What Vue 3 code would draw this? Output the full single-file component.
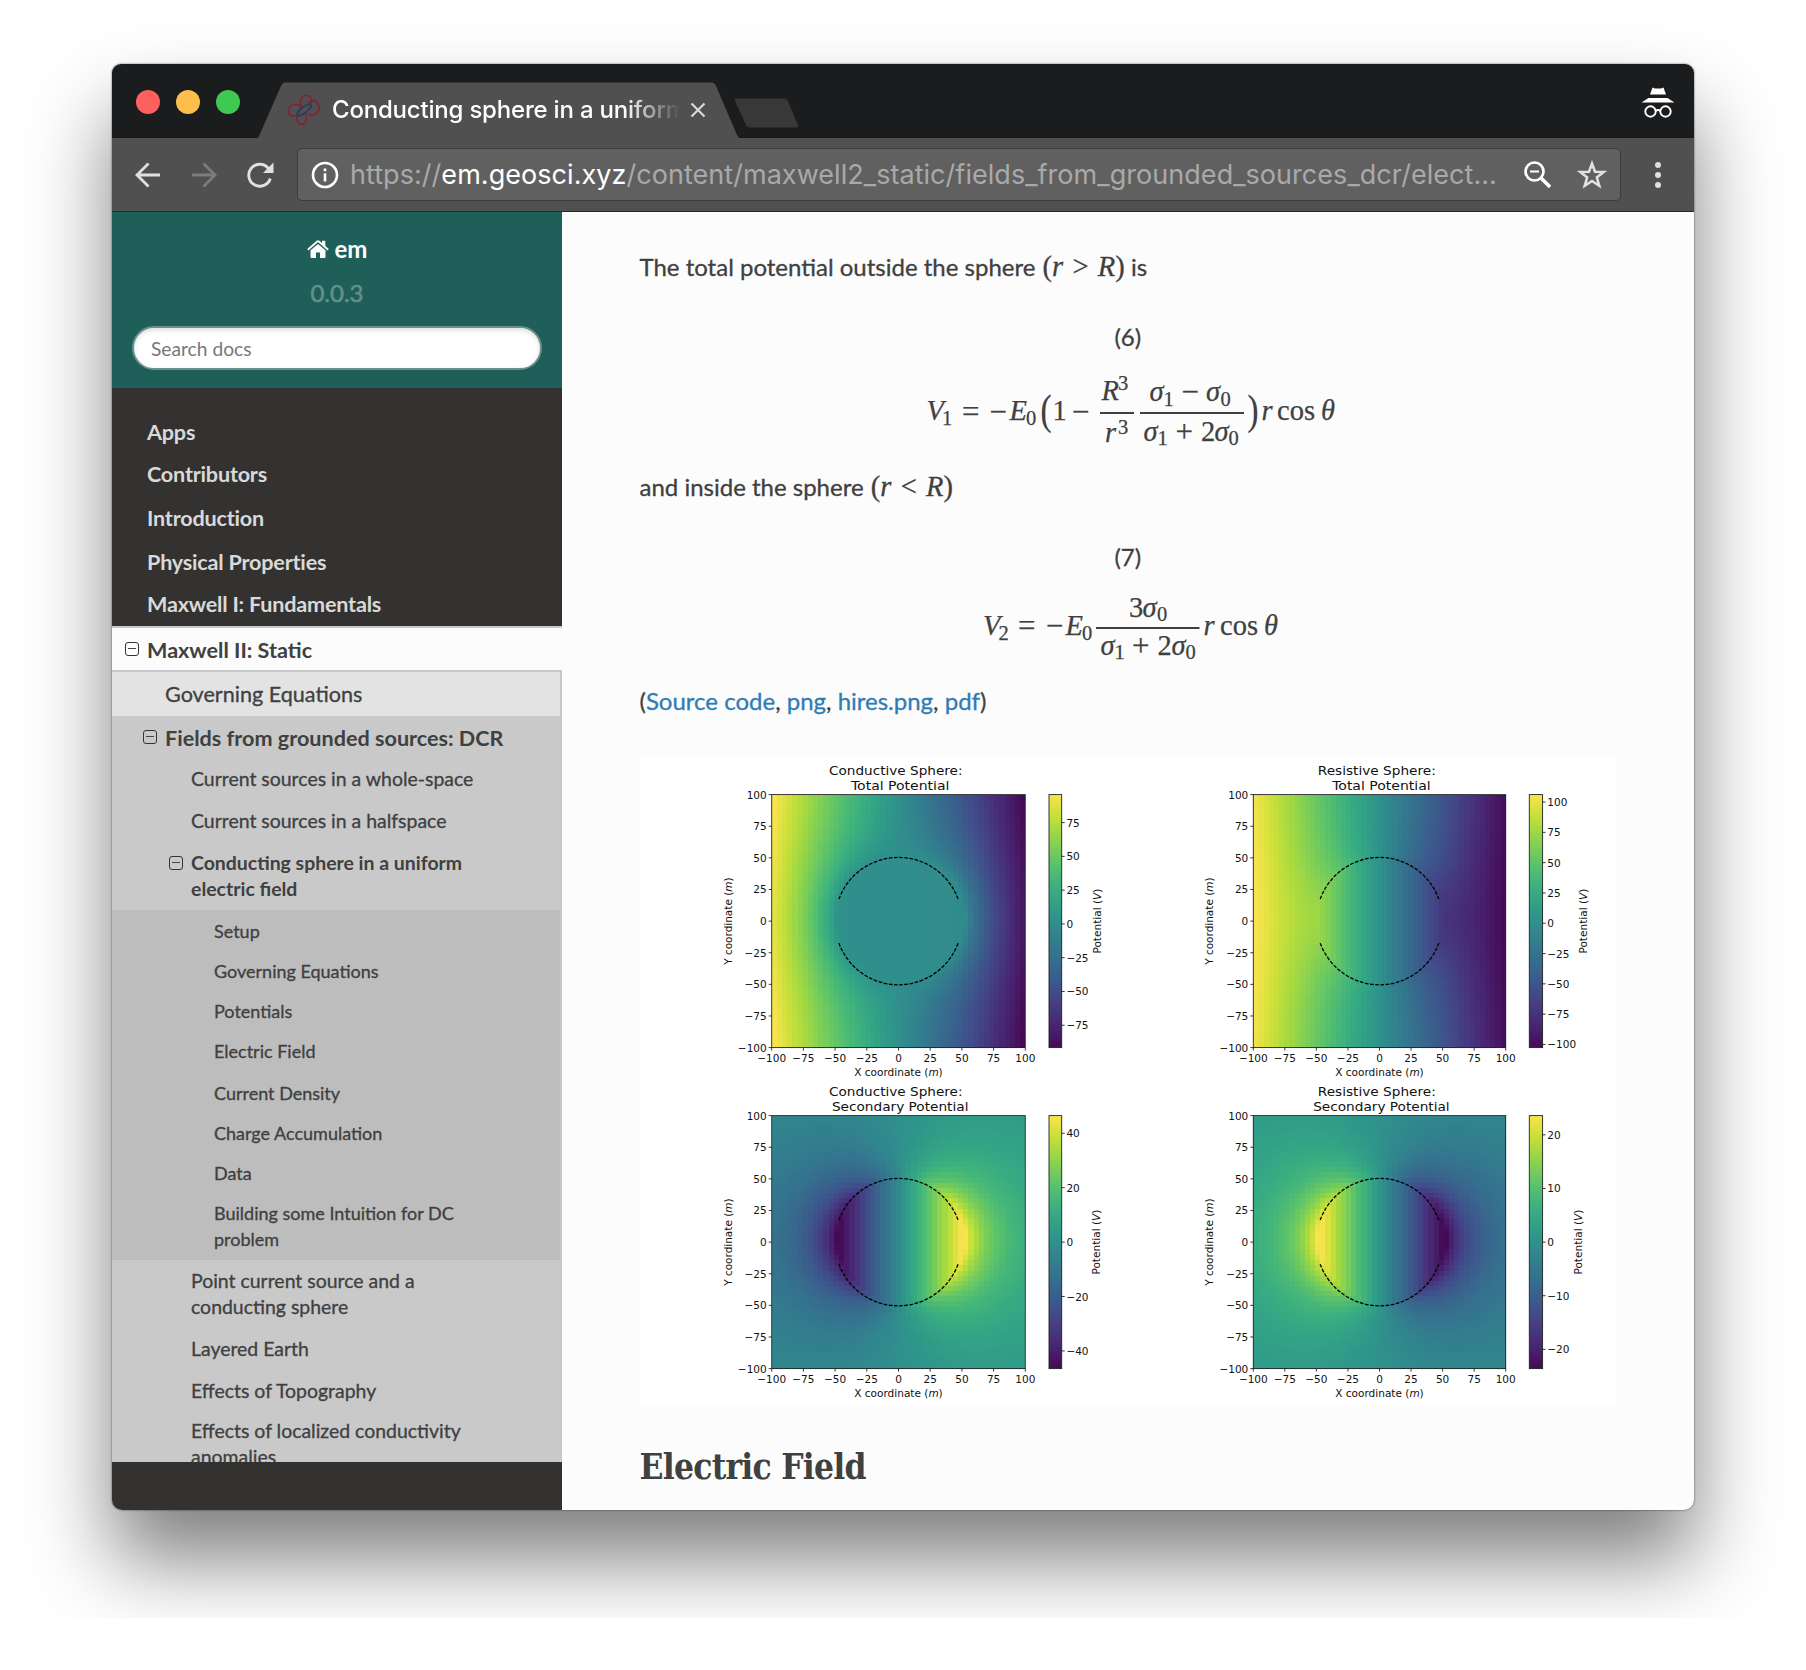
<script setup>
const topItems = [
  { text: 'Apps', h: 42 },
  { text: 'Contributors', h: 44 },
  { text: 'Introduction', h: 44 },
  { text: 'Physical Properties', h: 42 },
  { text: 'Maxwell I: Fundamentals', h: 35 },
]
const sections = [
  { lines: ['Setup'], h: 40 },
  { lines: ['Governing Equations'], h: 40 },
  { lines: ['Potentials'], h: 40 },
  { lines: ['Electric Field'], h: 42 },
  { lines: ['Current Density'], h: 40 },
  { lines: ['Charge Accumulation'], h: 40 },
  { lines: ['Data'], h: 40 },
  { lines: ['Building some Intuition for DC', 'problem'], h: 60 },
]
const after = [
  { lines: ['Point current source and a', 'conducting sphere'], h: 68 },
  { lines: ['Layered Earth'], h: 42 },
  { lines: ['Effects of Topography'], h: 40 },
  { lines: ['Effects of localized conductivity', 'anomalies'], h: 60 },
]

// Equations: i italic, n upright, o operator, s script size, b big delimiter
const eq1 = [
  ['i', 926.5, 420, 'V'], ['s', 942, 424.5, '1'], ['o', 962, 421.5, '='], ['o', 989.5, 421.5, '−'],
  ['i', 1009.5, 420, 'E'], ['s', 1026, 424.5, '0'], ['b', 1040.5, 424, '('], ['n', 1052.5, 420, '1'], ['o', 1072, 421.5, '−'],
  ['i', 1101.5, 400, 'R'], ['s', 1118, 389.5, '3'], ['i', 1105, 441.5, 'r'], ['s', 1118, 433.5, '3'],
  ['i', 1149.5, 400.5, 'σ'], ['s', 1163.5, 405.5, '1'], ['o', 1181.5, 401.5, '−'], ['i', 1206, 400.5, 'σ'], ['s', 1220.5, 405.5, '0'],
  ['i', 1143.5, 440.5, 'σ'], ['s', 1157.5, 444.5, '1'], ['o', 1175.5, 441.5, '+'], ['n', 1201, 440.5, '2'], ['i', 1214.5, 440.5, 'σ'], ['s', 1228.5, 444.5, '0'],
  ['b', 1247.5, 424, ')'], ['i', 1261.5, 420, 'r'], ['n', 1277, 420, 'cos'], ['i', 1321, 420, 'θ'],
]
const eq2 = [
  ['i', 983, 633.5, 'V'], ['s', 998.5, 639, '2'], ['o', 1018, 635, '='], ['o', 1046, 635, '−'],
  ['i', 1065.5, 633.5, 'E'], ['s', 1082, 639, '0'],
  ['n', 1129, 615.5, '3'], ['i', 1142.5, 615.5, 'σ'], ['s', 1157, 620, '0'],
  ['i', 1100.5, 654, 'σ'], ['s', 1114.5, 658, '1'], ['o', 1132, 655, '+'], ['n', 1157.5, 654, '2'], ['i', 1171.5, 654, 'σ'], ['s', 1185.5, 658, '0'],
  ['i', 1203.5, 633.5, 'r'], ['n', 1220, 633.5, 'cos'], ['i', 1264, 633.5, 'θ'],
]

const viridis = [
  [69, 10, 85], [72, 31, 108], [71, 50, 125], [66, 71, 135], [60, 89, 140], [55, 106, 141], [51, 121, 142], [48, 137, 141],
  [47, 152, 138], [52, 168, 132], [68, 182, 122], [95, 196, 105], [129, 208, 84], [168, 218, 64], [210, 225, 57], [251, 227, 80],
]
function color(t) {
  const p = Math.min(0.99999, Math.max(0, t)) * 15
  const i = Math.floor(p)
  const f = p - i
  const c = viridis[i].map((v, k) => Math.round(v + (viridis[i + 1][k] - v) * f))
  return `rgb(${c.join(',')})`
}
const barStops = viridis.map((c, i) => ({ o: i / 15, c: `rgb(${c.join(',')})` }))

// Potential of a sphere (radius 50) in a unit field, sampled on a regular grid
const N = 49
const H = 253
function build(opts) {
  const { k, secondary, left, top, w } = opts
  const vals = []
  for (let j = 0; j < N; j++) {
    for (let i = 0; i < N; i++) {
      const x = -100 + (200 * i) / N
      const y = -100 + (200 * j) / N
      const r = Math.hypot(x, y)
      const sec = r > 50 ? (k * 125000 * x) / r ** 3 : k * x
      vals.push(secondary ? sec : sec - x)
    }
  }
  const lo = Math.min(...vals)
  const hi = Math.max(...vals)
  const cw = w / N
  const ch = H / N
  const cells = vals.map((v, n) => {
    const i = n % N
    const j = Math.floor(n / N)
    return { x: left + i * cw, y: top + H - (j + 1) * ch, f: color((v - lo) / (hi - lo)) }
  })
  const ticks = [-100, -75, -50, -25, 0, 25, 50, 75, 100].map((v) => ({
    t: String(v).replace('-', '−'),
    x: left + ((v + 100) / 200) * w,
    y: top + H - ((v + 100) / 200) * H,
  }))
  const bar = opts.bar.map((v) => ({ t: String(v).replace('-', '−'), y: top + H - ((v - lo) / (hi - lo)) * H }))
  const cx = left + w / 2
  const cy = top + H / 2
  const sx = w / 200
  const sy = H / 200
  const arc = (s) =>
    `M${cx - 47 * sx} ${cy - s * 17.4 * sy}A${50 * sx} ${50 * sy} 0 0 ${s > 0 ? 1 : 0} ${cx + 47 * sx} ${cy - s * 17.4 * sy}`
  return { ...opts, cells, cw: cw + 0.02, ch: ch + 0.02, ticks, barTicks: bar, cx, cy, arcs: [arc(1), arc(-1)] }
}
const KC = 0.9706
const KR = -0.4925
const L = { left: 131.7, w: 253.6, bx: 409, bw: 12.7, t1x: 255.8, t2x: 260.2, t1: 'Conductive Sphere:', t1w: 133.5 }
const R = { left: 613.3, w: 252.4, bx: 889.3, bw: 13.3, t1x: 736.8, t2x: 741.4, t1: 'Resistive Sphere:', t1w: 118 }
const plots = [
  build({ ...L, top: 38.6, k: KC, secondary: false, t2: 'Total Potential', t2w: 98.5, bar: [-75, -50, -25, 0, 25, 50, 75], lx: 461 }),
  build({ ...R, top: 38.6, k: KR, secondary: false, t2: 'Total Potential', t2w: 98.5, bar: [-100, -75, -50, -25, 0, 25, 50, 75, 100], lx: 947.3 }),
  build({ ...L, top: 359.6, k: KC, secondary: true, t2: 'Secondary Potential', t2w: 136.5, bar: [-40, -20, 0, 20, 40], lx: 460.3 }),
  build({ ...R, top: 359.6, k: KR, secondary: true, t2: 'Secondary Potential', t2w: 136.5, bar: [-20, -10, 0, 10, 20], lx: 941.7 }),
]
</script>

<template>
  <div class="stage">
    <div class="window">
      <header class="tabstrip">
        <div class="lights"><i class="red"></i><i class="yellow"></i><i class="green"></i></div>
        <div class="tab">
          <svg class="tabshape" width="486" height="57" viewBox="0 0 486 57">
            <path d="M0 57C2 56 2.500 55 3.500 53L25 4Q26.500 .5 29 .5H456Q458.500 .5 460 4L481 53Q482.500 56 485 57Z" fill="#505050" />
          </svg>
          <svg class="favicon" width="34" height="32" viewBox="0 0 34 32" fill="none">
            <g stroke="#7d2434" stroke-width="1.600">
              <path d="M15 16C12 9 13 1.500 19 1.200C24 1.200 26 6 23 11" />
              <path d="M21 8C27 4 33 9 32 15C31 20 26 23 21 20" />
              <path d="M15 14C10 8 3 10 1.500 16C.5 21 5 23 11 21.500" />
              <path d="M11 20C8 25 11 30.500 15 30.500C19 30 20.500 24 18.500 20" />
            </g>
            <ellipse cx="17" cy="16" rx="8.500" ry="3" transform="rotate(-38 17 16)" stroke="#2c3a5e" stroke-width="1.800" />
          </svg>
          <span class="title">Conducting sphere in a uniform</span>
          <svg class="close" width="16" height="16" viewBox="0 0 16 16"><path d="M1.500 1.500L14.500 14.500M14.500 1.500L1.500 14.500" stroke="#d8d8d8" stroke-width="2.200" /></svg>
        </div>
        <svg class="newtab" width="65" height="31" viewBox="0 0 65 31"><path d="M3 .5H50Q53 .5 54 3L64 27.500Q64.500 29.500 62 29.500H16Q13 29.500 12 27L1 3Q.5 .5 3 .5Z" fill="#383838" /></svg>
        <svg class="incognito" width="34" height="32" viewBox="0 0 34 32">
          <path d="M11.500 .5L14 1.500H20L22.500 .5L25 7.500H9ZM7.500 11H26.500L33.500 15.500H.5Z" fill="#fff" />
          <g fill="none" stroke="#fff" stroke-width="1.900"><circle cx="9.500" cy="24.500" r="5.200" /><circle cx="24.500" cy="24.500" r="5.200" /><path d="M14.500 24Q17 22 19.500 24" /></g>
        </svg>
      </header>
      <div class="toolbar">
        <svg class="back" width="26" height="26" viewBox="0 0 26 26" fill="none" stroke="#e0e0e0" stroke-width="2.800"><path d="M25 13H2M13.500 1.500L2 13L13.500 24.500" /></svg>
        <svg class="fwd" width="26" height="26" viewBox="0 0 26 26" fill="none" stroke="#7c7c7c" stroke-width="2.800"><path d="M1 13H24M12.500 1.500L24 13L12.500 24.500" /></svg>
        <svg class="reload" width="28" height="28" viewBox="0 0 28 28"><path d="M22.500 7.500A11 11 0 1 0 24.300 17.500" fill="none" stroke="#e0e0e0" stroke-width="2.900" /><path d="M27.500 1.500V12H17Z" fill="#e0e0e0" /></svg>
        <div class="urlbox">
          <svg width="28" height="28" viewBox="0 0 28 28"><circle cx="14" cy="14" r="12" fill="none" stroke="#fff" stroke-width="2.600" /><path d="M12.700 12.200H15.300V20.500H12.700ZM12.700 7.500H15.300V10.200H12.700Z" fill="#fff" /></svg>
          <span class="url">https://<b>em.geosci.xyz</b>/content/maxwell2_static/fields_from_grounded_sources_dcr/elect...</span>
          <svg class="zoom" width="28" height="28" viewBox="0 0 28 28" fill="none" stroke="#fff"><circle cx="10.500" cy="10.500" r="9" stroke-width="2.700" /><path d="M17 17L26 26" stroke-width="3.600" /><path d="M6 10.500H15" stroke-width="2" /></svg>
          <svg class="star" width="30" height="30" viewBox="0 0 30 30"><path d="M15 3.500L18 11.700L26.700 12L19.800 17.400L22.300 25.800L15 20.900L7.700 25.800L10.200 17.400L3.300 12L12 11.700Z" fill="none" stroke="#e2e2e2" stroke-width="2.500" /></svg>
        </div>
        <div class="dots"><i></i><i></i><i></i></div>
      </div>
      <div class="page">
        <nav class="side">
          <div class="search">
            <div class="home">
              <svg width="22" height="19" viewBox="0 0 22 19" fill="#fcfcfc"><path d="M11 4L18.500 10.200V17Q18.500 18 17.500 18H13V12.500H9V18H4.500Q3.500 18 3.500 17V10.200Z" /><path d="M.8 9.800L10.200 1.600Q11 1 11.800 1.600L21.200 9.800" fill="none" stroke="#fcfcfc" stroke-width="1.900" /><path d="M15 .8H18.300V7.200L15 4.300Z" /></svg>
              <span>em</span>
            </div>
            <div class="version">0.0.3</div>
            <div class="input">Search docs</div>
          </div>
          <div class="menu">
            <a v-for="m in topItems" :key="m.text" class="l1" :style="{ height: m.h + 'px' }">{{ m.text }}</a>
            <div class="current">
              <a class="cur1"><i class="toggle"></i>Maxwell II: Static</a>
              <a class="l2 light">Governing Equations</a>
              <a class="l2 bold"><i class="toggle"></i>Fields from grounded sources: DCR</a>
              <a class="l3">Current sources in a whole-space</a>
              <a class="l3">Current sources in a halfspace</a>
              <a class="l3 bold tall"><i class="toggle"></i>Conducting sphere in a uniform<br />electric field</a>
              <div class="sub">
                <a v-for="s in sections" :key="s.lines[0]" class="l4" :style="{ height: s.h + 'px' }"><span v-for="l in s.lines" :key="l">{{ l }}</span></a>
              </div>
              <a v-for="s in after" :key="s.lines[0]" class="l3" :style="{ height: s.h + 'px' }"><span v-for="l in s.lines" :key="l">{{ l }}</span></a>
            </div>
          </div>
        </nav>
        <main class="content">
          <p class="p1">The total potential outside the sphere <span class="m">(<em>r</em><s>&gt;</s><em>R</em>)</span> is</p>
          <p class="num n6">(6)</p>
          <svg class="eq" width="976" height="84" viewBox="640 370 976 84">
            <text v-for="(g, i) in eq1" :key="i" :class="g[0]" :x="g[1]" :y="g[2]" :textLength="g[0] === 'b' ? 11 : null" lengthAdjust="spacingAndGlyphs">{{ g[3] }}</text>
            <path d="M1100 413H1134M1140 413H1244" stroke="#404040" stroke-width="2" />
          </svg>
          <p class="p2">and inside the sphere <span class="m">(<em>r</em><s>&lt;</s><em>R</em>)</span></p>
          <p class="num n7">(7)</p>
          <svg class="eq eq2" width="976" height="84" viewBox="640 585 976 84">
            <text v-for="(g, i) in eq2" :key="i" :class="g[0]" :x="g[1]" :y="g[2]">{{ g[3] }}</text>
            <path d="M1096 627H1199.500" stroke="#404040" stroke-width="2" />
          </svg>
          <p class="p3">(<a>Source code</a>, <a>png</a>, <a>hires.png</a>, <a>pdf</a>)</p>
          <svg class="figure" width="976" height="650" viewBox="0 0 976 650">
            <defs>
              <linearGradient id="bar" x1="0" y1="1" x2="0" y2="0"><stop v-for="s in barStops" :key="s.o" :offset="s.o" :stop-color="s.c" /></linearGradient>
            </defs>
            <rect width="976" height="650" fill="#fff" />
            <g v-for="(p, n) in plots" :key="n">
              <text class="ttl" :x="p.t1x" :y="p.top - 20" :textLength="p.t1w" lengthAdjust="spacingAndGlyphs">{{ p.t1 }}</text>
              <text class="ttl" :x="p.t2x" :y="p.top - 5" :textLength="p.t2w" lengthAdjust="spacingAndGlyphs">{{ p.t2 }}</text>
              <g shape-rendering="crispEdges"><rect v-for="(c, i) in p.cells" :key="i" :x="c.x" :y="c.y" :width="p.cw" :height="p.ch" :fill="c.f" /></g>
              <path v-for="a in p.arcs" :key="a" :d="a" fill="none" stroke="#000" stroke-width="1.300" stroke-dasharray="3.700 1.500" />
              <rect :x="p.left" :y="p.top" :width="p.w" :height="253" fill="none" stroke="#222" stroke-width=".9" />
              <g v-for="t in p.ticks" :key="t.t">
                <path :d="`M${t.x} ${p.top + 253}v3M${p.left} ${t.y}h-3`" stroke="#222" stroke-width=".9" />
                <text class="tk mid" :x="t.x" :y="p.top + 266.900">{{ t.t }}</text>
                <text class="tk end" :x="p.left - 5" :y="t.y + 4">{{ t.t }}</text>
              </g>
              <text class="tk mid" :x="p.cx" :y="p.top + 281" textLength="88.500" lengthAdjust="spacingAndGlyphs">X coordinate (<tspan class="it">m</tspan>)</text>
              <text class="tk mid" :transform="`translate(${p.left - 40} ${p.cy}) rotate(-90)`" textLength="87.500" lengthAdjust="spacingAndGlyphs">Y coordinate (<tspan class="it">m</tspan>)</text>
              <rect :x="p.bx" :y="p.top" :width="p.bw" :height="253" fill="url(#bar)" stroke="#222" stroke-width=".9" />
              <g v-for="t in p.barTicks" :key="t.t">
                <path :d="`M${p.bx + p.bw} ${t.y}h3`" stroke="#222" stroke-width=".9" />
                <text class="tk" :x="p.bx + p.bw + 4.700" :y="t.y + 4">{{ t.t }}</text>
              </g>
              <text class="tk mid" :transform="`translate(${p.lx} ${p.cy}) rotate(-90)`" textLength="65" lengthAdjust="spacingAndGlyphs">Potential (<tspan class="it">V</tspan>)</text>
            </g>
          </svg>
          <h2>Electric Field</h2>
        </main>
      </div>
    </div>
  </div>
</template>

<style>
body { margin: 0; background: #fff; }
</style>

<style scoped>
.stage { width: 1806px; height: 1618px; box-sizing: border-box; padding: 64px 112px 0; overflow: hidden; font-family: Lato, "Liberation Sans", sans-serif; }
.window { width: 1582px; height: 1446px; border-radius: 9px 9px 10px 10px; display: flex; flex-direction: column; overflow: hidden; box-shadow: 0 0 2px rgba(0, 0, 0, .7), 0 50px 82px rgba(0, 0, 0, .5); background: #fcfcfc; }
svg { display: block; flex: none; }
.tabstrip { height: 73px; flex: none; display: flex; background: #1b1c1e; border-bottom: 1px solid #161616; }
.lights { display: flex; gap: 16px; padding: 26px 0 0 24px; }
.lights i { width: 24px; height: 24px; border-radius: 50%; }
.red { background: #fc615d; }
.yellow { background: #fdbe4b; }
.green { background: #3ec952; }
.tab { position: relative; width: 486px; height: 57px; margin: 18px 0 -1px 16px; display: flex; }
.tabshape { position: absolute; left: 0; top: 0; }
.favicon { position: relative; margin: 12px 0 0 31px; }
.title { position: relative; margin: 10px 0 0 11px; width: 348px; height: 36px; overflow: hidden; white-space: nowrap; color: #fff; font: 500 24px/36px Inter, sans-serif; letter-spacing: -.2px; -webkit-mask-image: linear-gradient(90deg, #000 84%, transparent 100%); mask-image: linear-gradient(90deg, #000 84%, transparent 100%); }
.close { position: relative; margin: 20px 0 0 10px; }
.newtab { margin: 34px 0 0 -8px; }
.incognito { margin: 23px 19px 0 auto; }
.toolbar { height: 73px; flex: none; display: flex; align-items: center; background: #505050; border-bottom: 1px solid #272727; }
.back { margin-left: 23px; }
.fwd { margin-left: 30px; }
.reload { margin-left: 29px; }
.urlbox { margin-left: 23px; width: 1309px; height: 51px; border: 1px solid #3b3b3b; border-radius: 5px; background: #606060; display: flex; align-items: center; padding-left: 13px; }
.url { margin-left: 11px; width: 1160px; white-space: nowrap; color: #a9a9a9; font: 27px/40px Inter, sans-serif; letter-spacing: .045px; }
.url b { font-weight: 400; color: #fff; }
.zoom { margin-left: 14px; }
.star { margin-left: 25px; }
.dots { margin-left: 34px; display: flex; flex-direction: column; gap: 4px; }
.dots i { width: 6px; height: 6px; border-radius: 50%; background: #dedede; }
.page { display: flex; height: 1298px; }
.side { width: 450px; height: 1298px; background: #343230; flex: none; }
.search { height: 176px; background: #1f5f59; text-align: center; display: flex; flex-direction: column; align-items: center; }
.home { display: flex; align-items: center; gap: 6px; margin-top: 22px; height: 30px; color: #fcfcfc; font-weight: 700; font-size: 24px; line-height: 30px; }
.version { margin-top: 14px; font-size: 24px; line-height: 30px; color: #62908c; -webkit-text-stroke: .6px #62908c; }
.input { margin-top: 18px; width: 410px; height: 44px; box-sizing: border-box; border: 2px solid #6b918e; border-radius: 22px; background: #fff; text-align: left; padding-left: 17px; font-size: 19.200px; line-height: 41px; color: #777; box-shadow: inset 0 2px 5px #ddd; }
.menu { height: 1074px; overflow: hidden; padding-top: 31px; box-sizing: border-box; }
.menu a { display: block; box-sizing: border-box; line-height: 26px; white-space: nowrap; color: #404040; position: relative; -webkit-text-stroke: .3px #404040; }
.menu a span { display: block; }
.menu .l1 { padding-left: 35px; font-size: 21.600px; font-weight: 700; letter-spacing: -.2px; color: #d9d9d9; -webkit-text-stroke: 0; }
.current { background: #c9c9c9; border-top: 2px solid #c9c9c9; }
.menu .cur1 { height: 42px; padding: 9px 0 0 35px; font-size: 21.600px; font-weight: 700; background: #fcfcfc; -webkit-text-stroke: 0; }
.menu .l2 { height: 44px; padding: 9px 0 0 53px; font-size: 21.600px; }
.menu .light { background: #e3e3e3; margin-top: 2px; margin-right: 2px; }
.menu .bold { font-weight: 700; -webkit-text-stroke: 0; }
.menu .l2.bold { height: 49px; }
.menu .l3 { height: 42px; padding: 1px 0 0 79px; font-size: 19.440px; }
.menu .l3.tall { height: 61px; }
.sub { margin-right: 2px; height: 350px; background: #bdbdbd; padding-top: 8px; box-sizing: border-box; margin-bottom: 7px; }
.menu .l4 { padding-left: 102px; font-size: 18px; }
.toggle { position: absolute; width: 14px; height: 14px; box-sizing: border-box; border: 1.500px solid #333; border-radius: 3px; }
.toggle::after { content: ""; position: absolute; left: 2px; right: 2px; top: 5px; height: 1px; background: #444; }
.cur1 .toggle { left: 13px; top: 14px; }
.l2 .toggle { left: 31px; top: 14px; }
.l3 .toggle { left: 57px; top: 7px; }
.content { width: 976px; margin-left: 78px; color: #404040; display: flex; flex-direction: column; }
p { margin: 0 0 0 -.5px; font-size: 24px; line-height: 36px; height: 36px; white-space: pre; -webkit-text-stroke: .3px currentColor; }
.p1 { margin-top: 37px; }
.num { text-align: center; }
.n6 { margin-top: 34px; }
.eq { margin-top: 15px; }
.eq2 { margin-top: 11px; }
.p2 { margin-top: 15px; }
.n7 { margin-top: 34px; }
.p3 { margin-top: 13px; }
.p3 a { color: #2f7cb5; }
.m { font-family: "Liberation Serif", serif; font-size: 28.500px; line-height: 30px; margin-left: 1px; }
.m s { text-decoration: none; margin: 0 9.300px; }
.eq text { fill: #404040; stroke: #404040; stroke-width: .25px; font-family: "Liberation Serif", serif; font-size: 28.500px; }
.eq .i { font-style: italic; }
.eq .o { font-size: 31px; }
.eq .s { font-size: 20.500px; }
.eq .b { font-size: 42px; }
.figure { margin-top: 37px; }
.ttl { font: 12.700px "DejaVu Sans", sans-serif; text-anchor: middle; fill: #111; }
.tk { font: 10.500px "DejaVu Sans", sans-serif; fill: #111; }
.mid { text-anchor: middle; }
.end { text-anchor: end; }
.it { font-style: italic; }
h2 { margin: 36px 0 0 -.5px; font: 700 35px/50px "Roboto Slab", "DejaVu Serif Condensed", "DejaVu Serif", serif; letter-spacing: -.75px; white-space: nowrap; }
</style>
